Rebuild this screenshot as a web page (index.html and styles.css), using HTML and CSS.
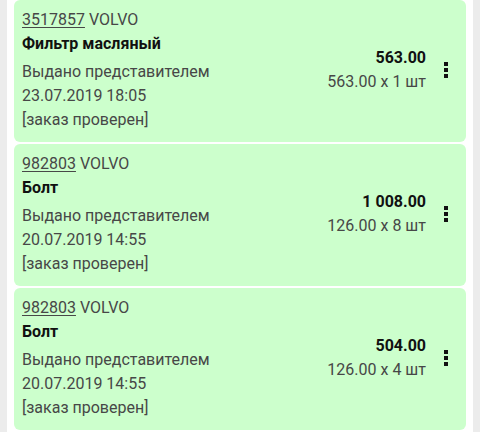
FILE: index.html
```html
<!DOCTYPE html>
<html lang="ru">
<head>
    <meta charset="UTF-8">
    <meta name="viewport" content="width=device-width, initial-scale=1">
    <title>Заказы</title>
    <link rel="stylesheet" href="styles.css">
</head>
<body>
<section class="wrap">

    <div class="order">
        <div class="info">
            <div class="code"><u>3517857</u> VOLVO</div>
            <div class="name">Фильтр масляный</div>
            <div class="line">Выдано представителем</div>
            <div class="line">23.07.2019 18:05</div>
            <div class="line">[заказ проверен]</div>
        </div>
        <div class="price">
            <div class="sum">563.00</div>
            <div class="qty">563.00 x 1 шт</div>
        </div>
        <div class="menu"><span></span><span></span><span></span></div>
    </div>

    <div class="order">
        <div class="info">
            <div class="code"><u>982803</u> VOLVO</div>
            <div class="name">Болт</div>
            <div class="line">Выдано представителем</div>
            <div class="line">20.07.2019 14:55</div>
            <div class="line">[заказ проверен]</div>
        </div>
        <div class="price">
            <div class="sum">1 008.00</div>
            <div class="qty">126.00 x 8 шт</div>
        </div>
        <div class="menu"><span></span><span></span><span></span></div>
    </div>

    <div class="order">
        <div class="info">
            <div class="code"><u>982803</u> VOLVO</div>
            <div class="name">Болт</div>
            <div class="line">Выдано представителем</div>
            <div class="line">20.07.2019 14:55</div>
            <div class="line">[заказ проверен]</div>
        </div>
        <div class="price">
            <div class="sum">504.00</div>
            <div class="qty">126.00 x 4 шт</div>
        </div>
        <div class="menu"><span></span><span></span><span></span></div>
    </div>

</section>
</body>
</html>
```

FILE: styles.css
```css
body{
    margin:0;
    background-color:#ececec;
    font-family:"Roboto","Liberation Sans",sans-serif;
    font-size:16px;
    color:#474747;
}
.wrap{
    margin:0 7px;
    padding:0 7px 6px;
    background-color:#fff;
    display:flex;
    flex-direction:column;
    gap:2px;
    min-height:432px;
    box-sizing:border-box;
}
.order{
    display:flex;
    align-items:center;
    background-color:#ccffcc;
    border-radius:6px;
    padding:8px 0 10px 8px;
}
.info{
    flex:1;
}
.code{
    line-height:24px;
}
.code u{
    text-underline-offset:2px;
}
.name{
    font-weight:bold;
    color:#111;
    line-height:24px;
    margin-bottom:4px;
}
.line{
    line-height:24px;
}
.price{
    text-align:right;
}
.sum{
    font-weight:bold;
    color:#111;
    line-height:24px;
}
.qty{
    line-height:24px;
}
.menu{
    width:40px;
    display:flex;
    flex-direction:column;
    align-items:center;
    gap:2px;
}
.menu span{
    width:4px;
    height:4px;
    background-color:#111;
}
```
